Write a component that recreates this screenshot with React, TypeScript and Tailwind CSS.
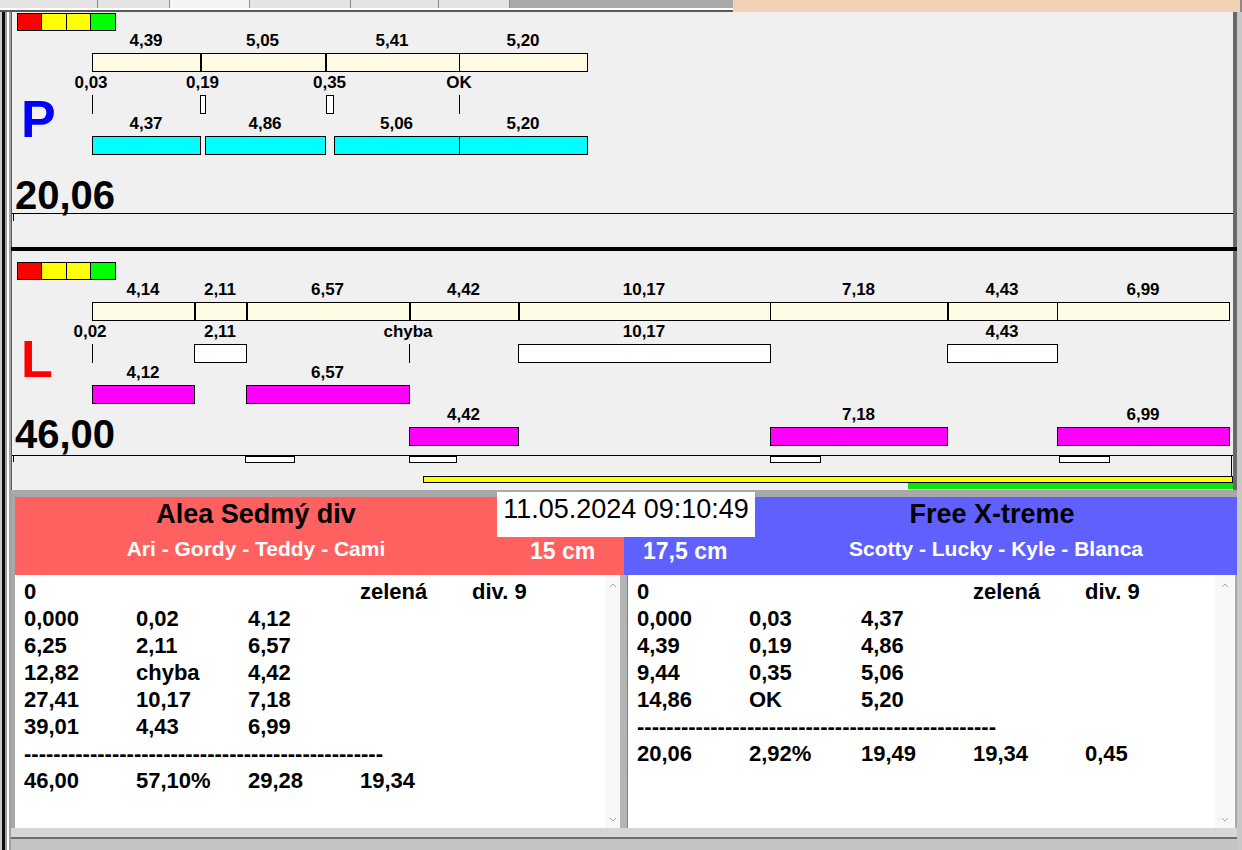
import React from "react";

const OX = 12;

type BarProps = { x1: number; x2: number; y: number; h: number; color: string; oy: number };

function Bar({ x1, x2, y, h, color, oy }: BarProps) {
  return (
    <div
      className={`absolute border border-black ${color}`}
      style={{ left: x1 - OX, top: y - oy, width: x2 - x1 + 1, height: h }}
    />
  );
}

function VLine({ x, y, h, oy, w = 1 }: { x: number; y: number; h: number; oy: number; w?: number }) {
  return <div className="absolute bg-black" style={{ left: x - OX, top: y - oy, width: w, height: h }} />;
}

function Lbl({ cx, cy, t, oy }: { cx: number; cy: number; t: string; oy: number }) {
  return (
    <div
      className="absolute -translate-x-1/2 whitespace-nowrap text-[17px] font-bold leading-none text-black"
      style={{ left: cx - OX, top: cy - 8 - oy }}
    >
      {t}
    </div>
  );
}

function Lights({ top }: { top: number }) {
  return (
    <div className="absolute left-[5px] flex" style={{ top }}>
      <div className="h-[18px] w-[25px] border border-black bg-[#ff0000]" />
      <div className="-ml-px h-[18px] w-[26px] border border-black bg-[#ffff00]" />
      <div className="-ml-px h-[18px] w-[25px] border border-black bg-[#ffff00]" />
      <div className="-ml-px h-[18px] w-[26px] border border-black bg-[#00ff00]" />
    </div>
  );
}

type Seg = [number, number];

function Track({ start, end, y, oy, dividers }: { start: number; end: number; y: number; oy: number; dividers: [number, number][] }) {
  return (
    <>
      <Bar x1={start} x2={end} y={y} h={19} color="bg-[#fffce6]" oy={oy} />
      {dividers.map(([x, w], i) => (
        <VLine key={i} x={x} y={y} h={19} oy={oy} w={w} />
      ))}
    </>
  );
}

function PanelP() {
  const oy = 12;
  const run: Seg[] = [
    [92, 200],
    [200, 325],
    [325, 459],
    [459, 587],
  ];
  const runLbl = ["4,39", "5,05", "5,41", "5,20"];
  const cyan: Seg[] = [
    [92, 200],
    [205, 325],
    [334, 459],
    [459, 587],
  ];
  const cyanLbl = ["4,37", "4,86", "5,06", "5,20"];
  return (
    <div className="flex h-[235px] flex-col border-l border-r-[4px] border-l-[#5a5a5a] border-r-[#6a6a6a] bg-[#f0f0f0]">
      <div className="relative h-[201px]">
        <Lights top={1} />
        {run.map(([a, b], i) => (
          <Lbl key={i} cx={(a + b) / 2} cy={40} t={runLbl[i]} oy={oy} />
        ))}
        <Track start={92} end={587} y={53} oy={oy} dividers={[[200, 2], [325, 2], [459, 1]]} />
        <Lbl cx={91} cy={82} t="0,03" oy={oy} />
        <Lbl cx={202.5} cy={82} t="0,19" oy={oy} />
        <Lbl cx={329.5} cy={82} t="0,35" oy={oy} />
        <Lbl cx={459} cy={82} t="OK" oy={oy} />
        <VLine x={92} y={95} h={19} oy={oy} />
        <Bar x1={200} x2={205} y={95} h={19} color="bg-white" oy={oy} />
        <Bar x1={326} x2={333} y={95} h={19} color="bg-white" oy={oy} />
        <VLine x={459} y={95} h={19} oy={oy} />
        {cyan.map(([a, b], i) => (
          <Lbl key={i} cx={(a + b) / 2} cy={123} t={cyanLbl[i]} oy={oy} />
        ))}
        {cyan.map(([a, b], i) => (
          <Bar key={i} x1={a} x2={b} y={136} h={19} color="bg-[#00ffff]" oy={oy} />
        ))}
        <div className="absolute left-[9px] top-[81px] text-[52px] font-bold leading-none text-[#0000ff]">P</div>
        <div className="absolute left-[3px] top-[163px] text-[40px] font-bold leading-none">20,06</div>
      </div>
      <div className="relative flex-1 border-t border-black">
        <div className="absolute left-[1px] top-0 h-[7px] w-px bg-black" />
      </div>
    </div>
  );
}

function PanelL() {
  const oy = 251;
  const run: Seg[] = [
    [92, 194],
    [194, 246],
    [246, 409],
    [409, 518],
    [518, 770],
    [770, 947],
    [947, 1057],
    [1057, 1229],
  ];
  const runLbl = ["4,14", "2,11", "6,57", "4,42", "10,17", "7,18", "4,43", "6,99"];
  const boxOy = 456;
  return (
    <div className="flex h-[239px] flex-col border-l border-r-[4px] border-l-[#5a5a5a] border-r-[#6a6a6a] bg-[#f0f0f0]">
      <div className="relative h-[204px]">
        <Lights top={11} />
        {run.map(([a, b], i) => (
          <Lbl key={i} cx={(a + b) / 2} cy={289} t={runLbl[i]} oy={oy} />
        ))}
        <Track
          start={92}
          end={1229}
          y={302}
          oy={oy}
          dividers={[[194, 2], [246, 2], [409, 2], [518, 2], [770, 1], [947, 2], [1057, 1]]}
        />
        <Lbl cx={90} cy={331} t="0,02" oy={oy} />
        <Lbl cx={220} cy={331} t="2,11" oy={oy} />
        <Lbl cx={408} cy={331} t="chyba" oy={oy} />
        <Lbl cx={644} cy={331} t="10,17" oy={oy} />
        <Lbl cx={1002} cy={331} t="4,43" oy={oy} />
        <VLine x={92} y={344} h={19} oy={oy} />
        <Bar x1={194} x2={246} y={344} h={19} color="bg-white" oy={oy} />
        <VLine x={409} y={344} h={19} oy={oy} />
        <Bar x1={518} x2={770} y={344} h={19} color="bg-white" oy={oy} />
        <Bar x1={947} x2={1057} y={344} h={19} color="bg-white" oy={oy} />
        <Lbl cx={143} cy={372} t="4,12" oy={oy} />
        <Lbl cx={327.5} cy={372} t="6,57" oy={oy} />
        <Bar x1={92} x2={194} y={385} h={19} color="bg-[#ff00ff]" oy={oy} />
        <Bar x1={246} x2={409} y={385} h={19} color="bg-[#ff00ff]" oy={oy} />
        <Lbl cx={463.5} cy={414} t="4,42" oy={oy} />
        <Lbl cx={858.5} cy={414} t="7,18" oy={oy} />
        <Lbl cx={1143} cy={414} t="6,99" oy={oy} />
        <Bar x1={409} x2={518} y={427} h={19} color="bg-[#ff00ff]" oy={oy} />
        <Bar x1={770} x2={947} y={427} h={19} color="bg-[#ff00ff]" oy={oy} />
        <Bar x1={1057} x2={1229} y={427} h={19} color="bg-[#ff00ff]" oy={oy} />
        <div className="absolute left-[9px] top-[82px] text-[52px] font-bold leading-none text-[#ff0000]">L</div>
        <div className="absolute left-[3px] top-[163px] text-[40px] font-bold leading-none">46,00</div>
      </div>
      <div className="relative flex-1 border-t border-black">
        <div className="absolute left-[1px] top-0 h-[6px] w-px bg-black" />
        <Bar x1={245} x2={294} y={456} h={7} color="bg-white" oy={boxOy} />
        <Bar x1={409} x2={456} y={456} h={7} color="bg-white" oy={boxOy} />
        <Bar x1={770} x2={820} y={456} h={7} color="bg-white" oy={boxOy} />
        <Bar x1={1059} x2={1109} y={456} h={7} color="bg-white" oy={boxOy} />
        <VLine x={1231} y={456} h={20} oy={boxOy} />
        <Bar x1={423} x2={1232} y={476} h={7} color="bg-[#ffff00]" oy={boxOy} />
        <div className="absolute bg-[#10e010]" style={{ left: 908 - OX, top: 483 - boxOy, width: 1233 - 908, height: 6 }} />
      </div>
    </div>
  );
}

type Row = string[] | "dash";

function List({ rows, scrollW }: { rows: Row[]; scrollW: "a" | "b" }) {
  return (
    <div className="flex flex-1 bg-white">
      <div className="flex-1 pl-[9px] pt-[3px] text-[22px] font-bold text-black">
        {rows.map((r, i) =>
          r === "dash" ? (
            <div key={i} className="h-[27px] whitespace-nowrap leading-[27px]">
              {"-".repeat(49)}
            </div>
          ) : (
            <div key={i} className="flex h-[27px] leading-[27px]">
              {r.map((c, j) => (
                <div key={j} className="w-[112px] shrink-0 whitespace-nowrap">
                  {c}
                </div>
              ))}
            </div>
          )
        )}
      </div>
      <div
        className={`flex flex-col items-center justify-between bg-[#f8f8f8] pb-[6px] pt-[8px] ${
          scrollW === "a" ? "w-[15px]" : "w-[20px]"
        }`}
      >
        <svg width="8" height="5" viewBox="0 0 8 5">
          <path d="M1 4 L4 1 L7 4" fill="none" stroke="#a8a8a8" strokeWidth="1" />
        </svg>
        <svg width="8" height="5" viewBox="0 0 8 5">
          <path d="M1 1 L4 4 L7 1" fill="none" stroke="#a8a8a8" strokeWidth="1" />
        </svg>
      </div>
    </div>
  );
}

function Teams() {
  const left: Row[] = [
    ["0", "", "", "zelená", "div. 9"],
    ["0,000", "0,02", "4,12"],
    ["6,25", "2,11", "6,57"],
    ["12,82", "chyba", "4,42"],
    ["27,41", "10,17", "7,18"],
    ["39,01", "4,43", "6,99"],
    "dash",
    ["46,00", "57,10%", "29,28", "19,34"],
  ];
  const right: Row[] = [
    ["0", "", "", "zelená", "div. 9"],
    ["0,000", "0,03", "4,37"],
    ["4,39", "0,19", "4,86"],
    ["9,44", "0,35", "5,06"],
    ["14,86", "OK", "5,20"],
    "dash",
    ["20,06", "2,92%", "19,49", "19,34", "0,45"],
  ];
  return (
    <div className="flex h-[331px] flex-col bg-[#a8a8a8] pl-[4px]">
      <div className="flex h-[78px]">
        <div className="flex w-[609px] flex-col bg-[#ff6060]">
          <div className="w-[482px] pt-[4px] text-center text-[27px] font-bold leading-none text-black">Alea Sedmý div</div>
          <div className="mt-[10px] flex">
            <div className="w-[482px] text-center text-[21px] font-bold leading-none text-white">Ari - Gordy - Teddy - Cami</div>
            <div className="mt-[2px] pl-[33px] text-[23px] font-bold leading-none text-white">15 cm</div>
          </div>
        </div>
        <div className="flex flex-1 flex-col bg-[#6060ff]">
          <div className="pl-[127px] pt-[4px]">
            <div className="w-[482px] text-center text-[27px] font-bold leading-none text-black">Free X-treme</div>
          </div>
          <div className="mt-[10px] flex">
            <div className="mt-[2px] w-[131px] pl-[19px] text-[23px] font-bold leading-none text-white">17,5 cm</div>
            <div className="w-[482px] text-center text-[21px] font-bold leading-none text-white">Scotty - Lucky - Kyle - Blanca</div>
          </div>
        </div>
      </div>
      <div className="flex h-[253px]">
        <div className="flex w-[605px]">
          <List rows={left} scrollW="a" />
        </div>
        <div className="w-[8px] border-r border-[#808080] bg-[#b4b4b4]" />
        <div className="flex flex-1">
          <List rows={right} scrollW="b" />
          <div className="w-[2px] bg-[#a8a8a8]" />
        </div>
      </div>
    </div>
  );
}

function TopStrip() {
  return (
    <div className="flex h-[12px]">
      <div className="flex w-[733px] flex-col">
        <div className="flex h-[8px] bg-[#e4e4e4]">
          <div className="w-[98px] border-r border-[#8c8c8c]" />
          <div className="w-[72px] border-r border-[#8c8c8c]" />
          <div className="w-[80px] border-r border-[#8c8c8c] bg-[#f4f4f4]" />
          <div className="w-[101px] border-r border-[#8c8c8c]" />
          <div className="w-[88px] border-r border-[#8c8c8c]" />
          <div className="w-[71px] border-r border-[#8c8c8c]" />
          <div className="flex-1 bg-[#a9a9a9]" />
        </div>
        <div className="h-[2px] bg-white" />
        <div className="h-[2px] bg-[#5a5a5a]" />
      </div>
      <div className="w-[507px] bg-[#f2d2b4]" />
      <div className="flex-1 bg-[#8a8a8a]" />
    </div>
  );
}

function LeftEdge() {
  return (
    <div className="flex w-[11px]">
      <div className="w-[2px] bg-[#c8c8c8]" />
      <div className="w-[3px] bg-[#0a0a0a]" />
      <div className="w-[2px] bg-[#a0a0a0]" />
      <div className="w-[2px] bg-white" />
      <div className="w-[2px] bg-[#a0a0a0]" />
    </div>
  );
}

function BottomStrip() {
  return (
    <div className="flex h-[22px] flex-col">
      <div className="h-[9px] bg-[#d6d6d6]" />
      <div className="h-[2px] bg-[#6e6e6e]" />
      <div className="flex-1 bg-[#c4c4c4]" />
    </div>
  );
}

export default function App() {
  return (
    <div className="relative flex h-[850px] w-[1242px] flex-col overflow-hidden bg-[#c8c8c8] font-['Liberation_Sans',Arial,sans-serif] text-black">
      <TopStrip />
      <div className="flex min-h-0 flex-1">
        <LeftEdge />
        <div className="flex w-[1226px] flex-col">
          <PanelP />
          <div className="h-[4px] bg-black" />
          <PanelL />
          <div className="h-[7px] bg-[#a8a8a8]" />
          <Teams />
          <BottomStrip />
        </div>
        <div className="flex-1 bg-[#c8c8c8]" />
      </div>
      <div className="absolute left-[497px] top-[492px] flex h-[45px] w-[258px] justify-center bg-white pt-[4px] text-[27px] leading-none text-black">
        11.05.2024 09:10:49
      </div>
    </div>
  );
}
